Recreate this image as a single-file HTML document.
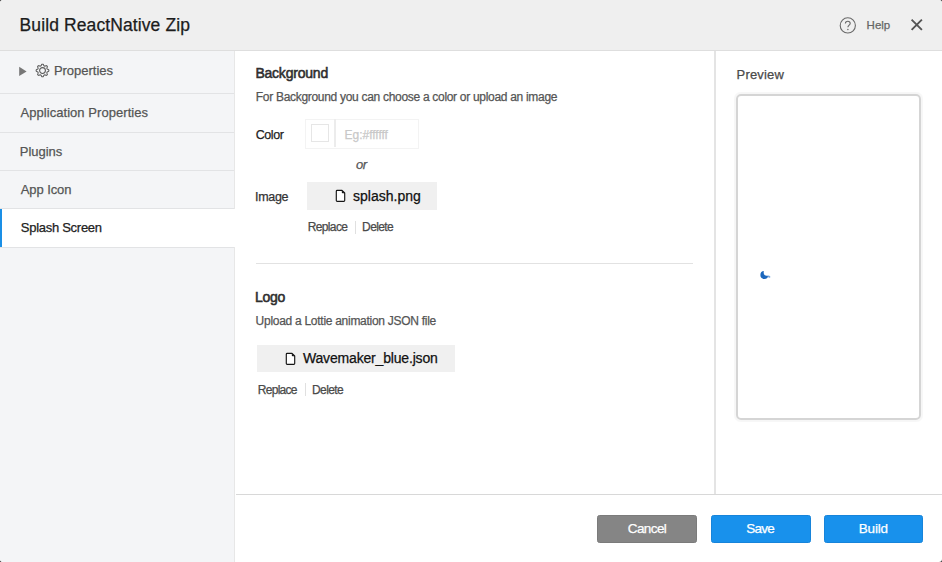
<!DOCTYPE html>
<html><head><meta charset="utf-8">
<style>
*{box-sizing:border-box;margin:0;padding:0}
html,body{width:942px;height:562px;overflow:hidden;background:#3a3a3a;font-family:"Liberation Sans",sans-serif}
.dlg{position:absolute;left:0;top:0;width:942px;height:562px;background:#fff;border-radius:3px;overflow:hidden}
.r{position:absolute}
.t{position:absolute;line-height:1;white-space:pre;font-family:"Liberation Sans",sans-serif;-webkit-text-stroke:0.25px currentColor}
</style></head><body>
<div class="dlg">
  <!-- header -->
  <div class="r" style="left:0;top:0;width:942px;height:50px;background:#efefef"></div>
  <div class="r" style="left:0;top:50px;width:942px;height:1px;background:#dedede"></div>
  <svg class="r" style="left:838px;top:16px" width="20" height="20" viewBox="0 0 20 20">
    <circle cx="9.8" cy="9.4" r="7.6" fill="none" stroke="#6a6a6a" stroke-width="1.1"/>
    <path d="M7.4 7.6C7.4 6.2 8.5 5.3 9.8 5.3C11.1 5.3 12.2 6.2 12.2 7.5C12.2 9 9.9 9.3 9.9 11.2" fill="none" stroke="#6a6a6a" stroke-width="1.1"/>
    <circle cx="9.9" cy="13.4" r="0.75" fill="#6a6a6a"/>
  </svg>
  <svg class="r" style="left:909px;top:16.6px" width="15" height="15" viewBox="0 0 15 15"><path d="M2.6 2.6L12.9 12.9M12.9 2.6L2.6 12.9" stroke="#555" stroke-width="1.9"/></svg>

  <!-- sidebar -->
  <div class="r" style="left:0;top:51px;width:234px;height:511px;background:#f4f5f7"></div>
  <div class="r" style="left:234px;top:51px;width:1.3px;height:158px;background:#e7e7e7"></div>
  <div class="r" style="left:234px;top:247px;width:1.3px;height:315px;background:#e7e7e7"></div>
  <div class="r" style="left:0;top:93px;width:234px;height:1px;background:#e2e3e5"></div>
  <div class="r" style="left:0;top:132px;width:234px;height:1px;background:#e2e3e5"></div>
  <div class="r" style="left:0;top:170px;width:234px;height:1px;background:#e2e3e5"></div>
  <div class="r" style="left:0;top:208px;width:234px;height:1px;background:#e2e3e5"></div>
  <div class="r" style="left:0;top:209px;width:236px;height:38px;background:#fff"></div>
  <div class="r" style="left:0;top:209px;width:2.2px;height:38px;background:#1a8fe6"></div>
  <div class="r" style="left:0;top:247px;width:234px;height:1px;background:#e2e3e5"></div>
  <svg class="r" style="left:18px;top:66px" width="10" height="11" viewBox="0 0 10 11"><path d="M1.2 0.8L8.6 5.4L1.2 10Z" fill="#777"/></svg>
  <svg class="r" style="left:35.2px;top:62.6px" width="15" height="15" viewBox="0 0 15 15">
    <path d="M13.85 7.50 L13.84 7.67 L13.82 7.83 L13.78 7.99 L13.71 8.15 L13.59 8.30 L13.40 8.43 L13.14 8.55 L12.85 8.64 L12.58 8.72 L12.39 8.81 L12.25 8.91 L12.16 9.01 L12.09 9.13 L12.03 9.24 L11.98 9.36 L11.93 9.47 L11.89 9.60 L11.87 9.72 L11.86 9.87 L11.88 10.03 L11.96 10.23 L12.08 10.48 L12.23 10.75 L12.33 11.01 L12.37 11.24 L12.35 11.43 L12.29 11.59 L12.20 11.74 L12.10 11.87 L11.99 11.99 L11.87 12.10 L11.74 12.20 L11.59 12.29 L11.43 12.35 L11.24 12.37 L11.01 12.33 L10.75 12.23 L10.48 12.08 L10.23 11.96 L10.03 11.88 L9.87 11.86 L9.72 11.87 L9.60 11.89 L9.47 11.93 L9.36 11.98 L9.24 12.03 L9.13 12.09 L9.01 12.16 L8.91 12.25 L8.81 12.39 L8.72 12.58 L8.64 12.85 L8.55 13.14 L8.43 13.40 L8.30 13.59 L8.15 13.71 L7.99 13.78 L7.83 13.82 L7.67 13.84 L7.50 13.85 L7.33 13.84 L7.17 13.82 L7.01 13.78 L6.85 13.71 L6.70 13.59 L6.57 13.40 L6.45 13.14 L6.36 12.85 L6.28 12.58 L6.19 12.39 L6.09 12.25 L5.99 12.16 L5.87 12.09 L5.76 12.03 L5.64 11.98 L5.53 11.93 L5.40 11.89 L5.28 11.87 L5.13 11.86 L4.97 11.88 L4.77 11.96 L4.52 12.08 L4.25 12.23 L3.99 12.33 L3.76 12.37 L3.57 12.35 L3.41 12.29 L3.26 12.20 L3.13 12.10 L3.01 11.99 L2.90 11.87 L2.80 11.74 L2.71 11.59 L2.65 11.43 L2.63 11.24 L2.67 11.01 L2.77 10.75 L2.92 10.48 L3.04 10.23 L3.12 10.03 L3.14 9.87 L3.13 9.72 L3.11 9.60 L3.07 9.47 L3.02 9.36 L2.97 9.24 L2.91 9.13 L2.84 9.01 L2.75 8.91 L2.61 8.81 L2.42 8.72 L2.15 8.64 L1.86 8.55 L1.60 8.43 L1.41 8.30 L1.29 8.15 L1.22 7.99 L1.18 7.83 L1.16 7.67 L1.15 7.50 L1.16 7.33 L1.18 7.17 L1.22 7.01 L1.29 6.85 L1.41 6.70 L1.60 6.57 L1.86 6.45 L2.15 6.36 L2.42 6.28 L2.61 6.19 L2.75 6.09 L2.84 5.99 L2.91 5.87 L2.97 5.76 L3.02 5.64 L3.07 5.53 L3.11 5.40 L3.13 5.28 L3.14 5.13 L3.12 4.97 L3.04 4.77 L2.92 4.52 L2.77 4.25 L2.67 3.99 L2.63 3.76 L2.65 3.57 L2.71 3.41 L2.80 3.26 L2.90 3.13 L3.01 3.01 L3.13 2.90 L3.26 2.80 L3.41 2.71 L3.57 2.65 L3.76 2.63 L3.99 2.67 L4.25 2.77 L4.52 2.92 L4.77 3.04 L4.97 3.12 L5.13 3.14 L5.28 3.13 L5.40 3.11 L5.53 3.07 L5.64 3.02 L5.76 2.97 L5.87 2.91 L5.99 2.84 L6.09 2.75 L6.19 2.61 L6.28 2.42 L6.36 2.15 L6.45 1.86 L6.57 1.60 L6.70 1.41 L6.85 1.29 L7.01 1.22 L7.17 1.18 L7.33 1.16 L7.50 1.15 L7.67 1.16 L7.83 1.18 L7.99 1.22 L8.15 1.29 L8.30 1.41 L8.43 1.60 L8.55 1.86 L8.64 2.15 L8.72 2.42 L8.81 2.61 L8.91 2.75 L9.01 2.84 L9.13 2.91 L9.24 2.97 L9.36 3.02 L9.47 3.07 L9.60 3.11 L9.72 3.13 L9.87 3.14 L10.03 3.12 L10.23 3.04 L10.48 2.92 L10.75 2.77 L11.01 2.67 L11.24 2.63 L11.43 2.65 L11.59 2.71 L11.74 2.80 L11.87 2.90 L11.99 3.01 L12.10 3.13 L12.20 3.26 L12.29 3.41 L12.35 3.57 L12.37 3.76 L12.33 3.99 L12.23 4.25 L12.08 4.52 L11.96 4.77 L11.88 4.97 L11.86 5.13 L11.87 5.28 L11.89 5.40 L11.93 5.53 L11.98 5.64 L12.03 5.76 L12.09 5.87 L12.16 5.99 L12.25 6.09 L12.39 6.19 L12.58 6.28 L12.85 6.36 L13.14 6.45 L13.40 6.57 L13.59 6.70 L13.71 6.85 L13.78 7.01 L13.82 7.17 L13.84 7.33Z" fill="none" stroke="#5a5a5a" stroke-width="1.05" stroke-linejoin="round"/>
    <circle cx="7.5" cy="7.5" r="2.9" fill="none" stroke="#5a5a5a" stroke-width="1.05"/>
  </svg>

  <!-- content -->
  <!-- color input -->
  <div class="r" style="left:305px;top:119px;width:114px;height:30px;border:1px solid #f3f3f3"></div>
  <div class="r" style="left:334.3px;top:119px;width:1.4px;height:28px;background:#ececec"></div>
  <div class="r" style="left:311px;top:124px;width:18px;height:18px;border:1px solid #e6e6e6"></div>
  <!-- image file -->
  <div class="r" style="left:307px;top:182px;width:130px;height:27.5px;background:#f0f0f0"></div>
  <svg class="r" style="left:335px;top:189.2px" width="11" height="14" viewBox="0 0 11 14"><path d="M2.1 1.3H7L9.7 4V11.4Q9.7 12.3 8.8 12.3H2.1Q1.3 12.3 1.3 11.4V2.2Q1.3 1.3 2.1 1.3Z" fill="#fff" stroke="#151515" stroke-width="1.15" stroke-linejoin="round"/><path d="M6.8 1.3L9.7 4.2L7.6 4.2Q6.8 4.2 6.8 3.4Z" fill="#151515"/></svg>
  <div class="r" style="left:355px;top:221px;width:1px;height:13px;background:#e0e0e0"></div>
  <!-- divider -->
  <div class="r" style="left:256px;top:263px;width:437px;height:1px;background:#e2e2e2"></div>
  <!-- logo file -->
  <div class="r" style="left:257px;top:345px;width:198px;height:27px;background:#f0f0f0"></div>
  <svg class="r" style="left:285px;top:352.2px" width="11" height="14" viewBox="0 0 11 14"><path d="M2.1 1.3H7L9.7 4V11.4Q9.7 12.3 8.8 12.3H2.1Q1.3 12.3 1.3 11.4V2.2Q1.3 1.3 2.1 1.3Z" fill="#fff" stroke="#151515" stroke-width="1.15" stroke-linejoin="round"/><path d="M6.8 1.3L9.7 4.2L7.6 4.2Q6.8 4.2 6.8 3.4Z" fill="#151515"/></svg>
  <div class="r" style="left:305px;top:383px;width:1px;height:13px;background:#e0e0e0"></div>

  <!-- preview -->
  <div class="r" style="left:714px;top:51px;width:2px;height:443px;background:#e4e4e4"></div>
  <div class="r" style="left:736px;top:94px;width:185px;height:326px;border:2px solid #d5d5d5;border-radius:5px;box-shadow:0 0 1px 1.5px rgba(0,0,0,0.035)"></div>
  <svg class="r" style="left:755px;top:265px" width="20" height="20" viewBox="0 0 20 20">
    <defs><mask id="mk"><rect width="20" height="20" fill="#fff"/><circle cx="11.9" cy="7.6" r="3.2" fill="#000"/></mask></defs>
    <circle cx="9.3" cy="10" r="3.9" fill="#1b67bd" mask="url(#mk)"/>
    <ellipse cx="14" cy="11.6" rx="1.5" ry="0.9" fill="#7aa6dc" transform="rotate(25 14 11.6)"/>
  </svg>

  <!-- footer -->
  <div class="r" style="left:236px;top:494px;width:706px;height:1px;background:#d8d8d8"></div>
  <div class="r" style="left:597.3px;top:515.2px;width:100px;height:27.6px;background:#858585;border:1px solid #7b7b7b;border-radius:2.5px"></div>
  <div class="r" style="left:710.5px;top:515.2px;width:100px;height:27.6px;background:#1891ec;border:1px solid #1784da;border-radius:2.5px"></div>
  <div class="r" style="left:823.8px;top:515.2px;width:99.4px;height:27.6px;background:#1891ec;border:1px solid #1784da;border-radius:2.5px"></div>

<div class="t" style="left:19.60px;top:17.00px;font-size:17.5px;color:#1c1c1c;letter-spacing:0.103px">Build ReactNative Zip</div>
<div class="t" style="left:866.60px;top:19.90px;font-size:11.5px;color:#666;letter-spacing:-0.019px">Help</div>
<div class="t" style="left:53.90px;top:63.70px;font-size:13px;color:#555;letter-spacing:-0.017px">Properties</div>
<div class="t" style="left:20.50px;top:106.40px;font-size:13px;color:#555;letter-spacing:0.050px">Application Properties</div>
<div class="t" style="left:19.80px;top:144.50px;font-size:13px;color:#555;letter-spacing:-0.023px">Plugins</div>
<div class="t" style="left:20.80px;top:182.90px;font-size:13px;color:#555;letter-spacing:-0.098px">App Icon</div>
<div class="t" style="left:20.80px;top:220.80px;font-size:13px;color:#222;letter-spacing:-0.277px">Splash Screen</div>
<div class="t" style="left:255.40px;top:65.90px;font-size:14px;color:#2e2e2e;letter-spacing:-0.215px;-webkit-text-stroke:0.55px currentColor">Background</div>
<div class="t" style="left:255.80px;top:91.20px;font-size:12px;color:#555;letter-spacing:-0.300px">For Background you can choose a color or upload an image</div>
<div class="t" style="left:255.70px;top:128.70px;font-size:12.5px;color:#222;letter-spacing:-0.427px">Color</div>
<div class="t" style="left:344.60px;top:128.70px;font-size:12px;color:#c8c8c8;letter-spacing:-0.030px">Eg:#ffffff</div>
<div class="t" style="left:356.10px;top:157.90px;font-size:13px;color:#555;letter-spacing:-0.630px;font-style:italic">or</div>
<div class="t" style="left:255.00px;top:190.90px;font-size:12.5px;color:#333;letter-spacing:-0.297px">Image</div>
<div class="t" style="left:353.00px;top:188.90px;font-size:14px;color:#111;letter-spacing:0.008px">splash.png</div>
<div class="t" style="left:307.70px;top:221.30px;font-size:12px;color:#4a4a4a;letter-spacing:-0.626px">Replace</div>
<div class="t" style="left:362.10px;top:221.30px;font-size:12px;color:#4a4a4a;letter-spacing:-0.603px">Delete</div>
<div class="t" style="left:255.10px;top:290.00px;font-size:14px;color:#2e2e2e;letter-spacing:-0.286px;-webkit-text-stroke:0.55px currentColor">Logo</div>
<div class="t" style="left:255.60px;top:315.30px;font-size:12px;color:#555;letter-spacing:-0.277px">Upload a Lottie animation JSON file</div>
<div class="t" style="left:303.00px;top:351.40px;font-size:14px;color:#111;letter-spacing:-0.178px">Wavemaker_blue.json</div>
<div class="t" style="left:257.80px;top:383.50px;font-size:12px;color:#4a4a4a;letter-spacing:-0.726px">Replace</div>
<div class="t" style="left:312.00px;top:383.50px;font-size:12px;color:#4a4a4a;letter-spacing:-0.603px">Delete</div>
<div class="t" style="left:736.60px;top:67.70px;font-size:13px;color:#4a4a4a;letter-spacing:0.159px">Preview</div>
<div class="t" style="left:627.80px;top:521.90px;font-size:13.5px;color:#fff;letter-spacing:-0.605px">Cancel</div>
<div class="t" style="left:746.30px;top:521.90px;font-size:13.5px;color:#fff;letter-spacing:-0.754px">Save</div>
<div class="t" style="left:858.80px;top:521.90px;font-size:13.5px;color:#fff;letter-spacing:-0.203px">Build</div>
</div>
</body></html>
